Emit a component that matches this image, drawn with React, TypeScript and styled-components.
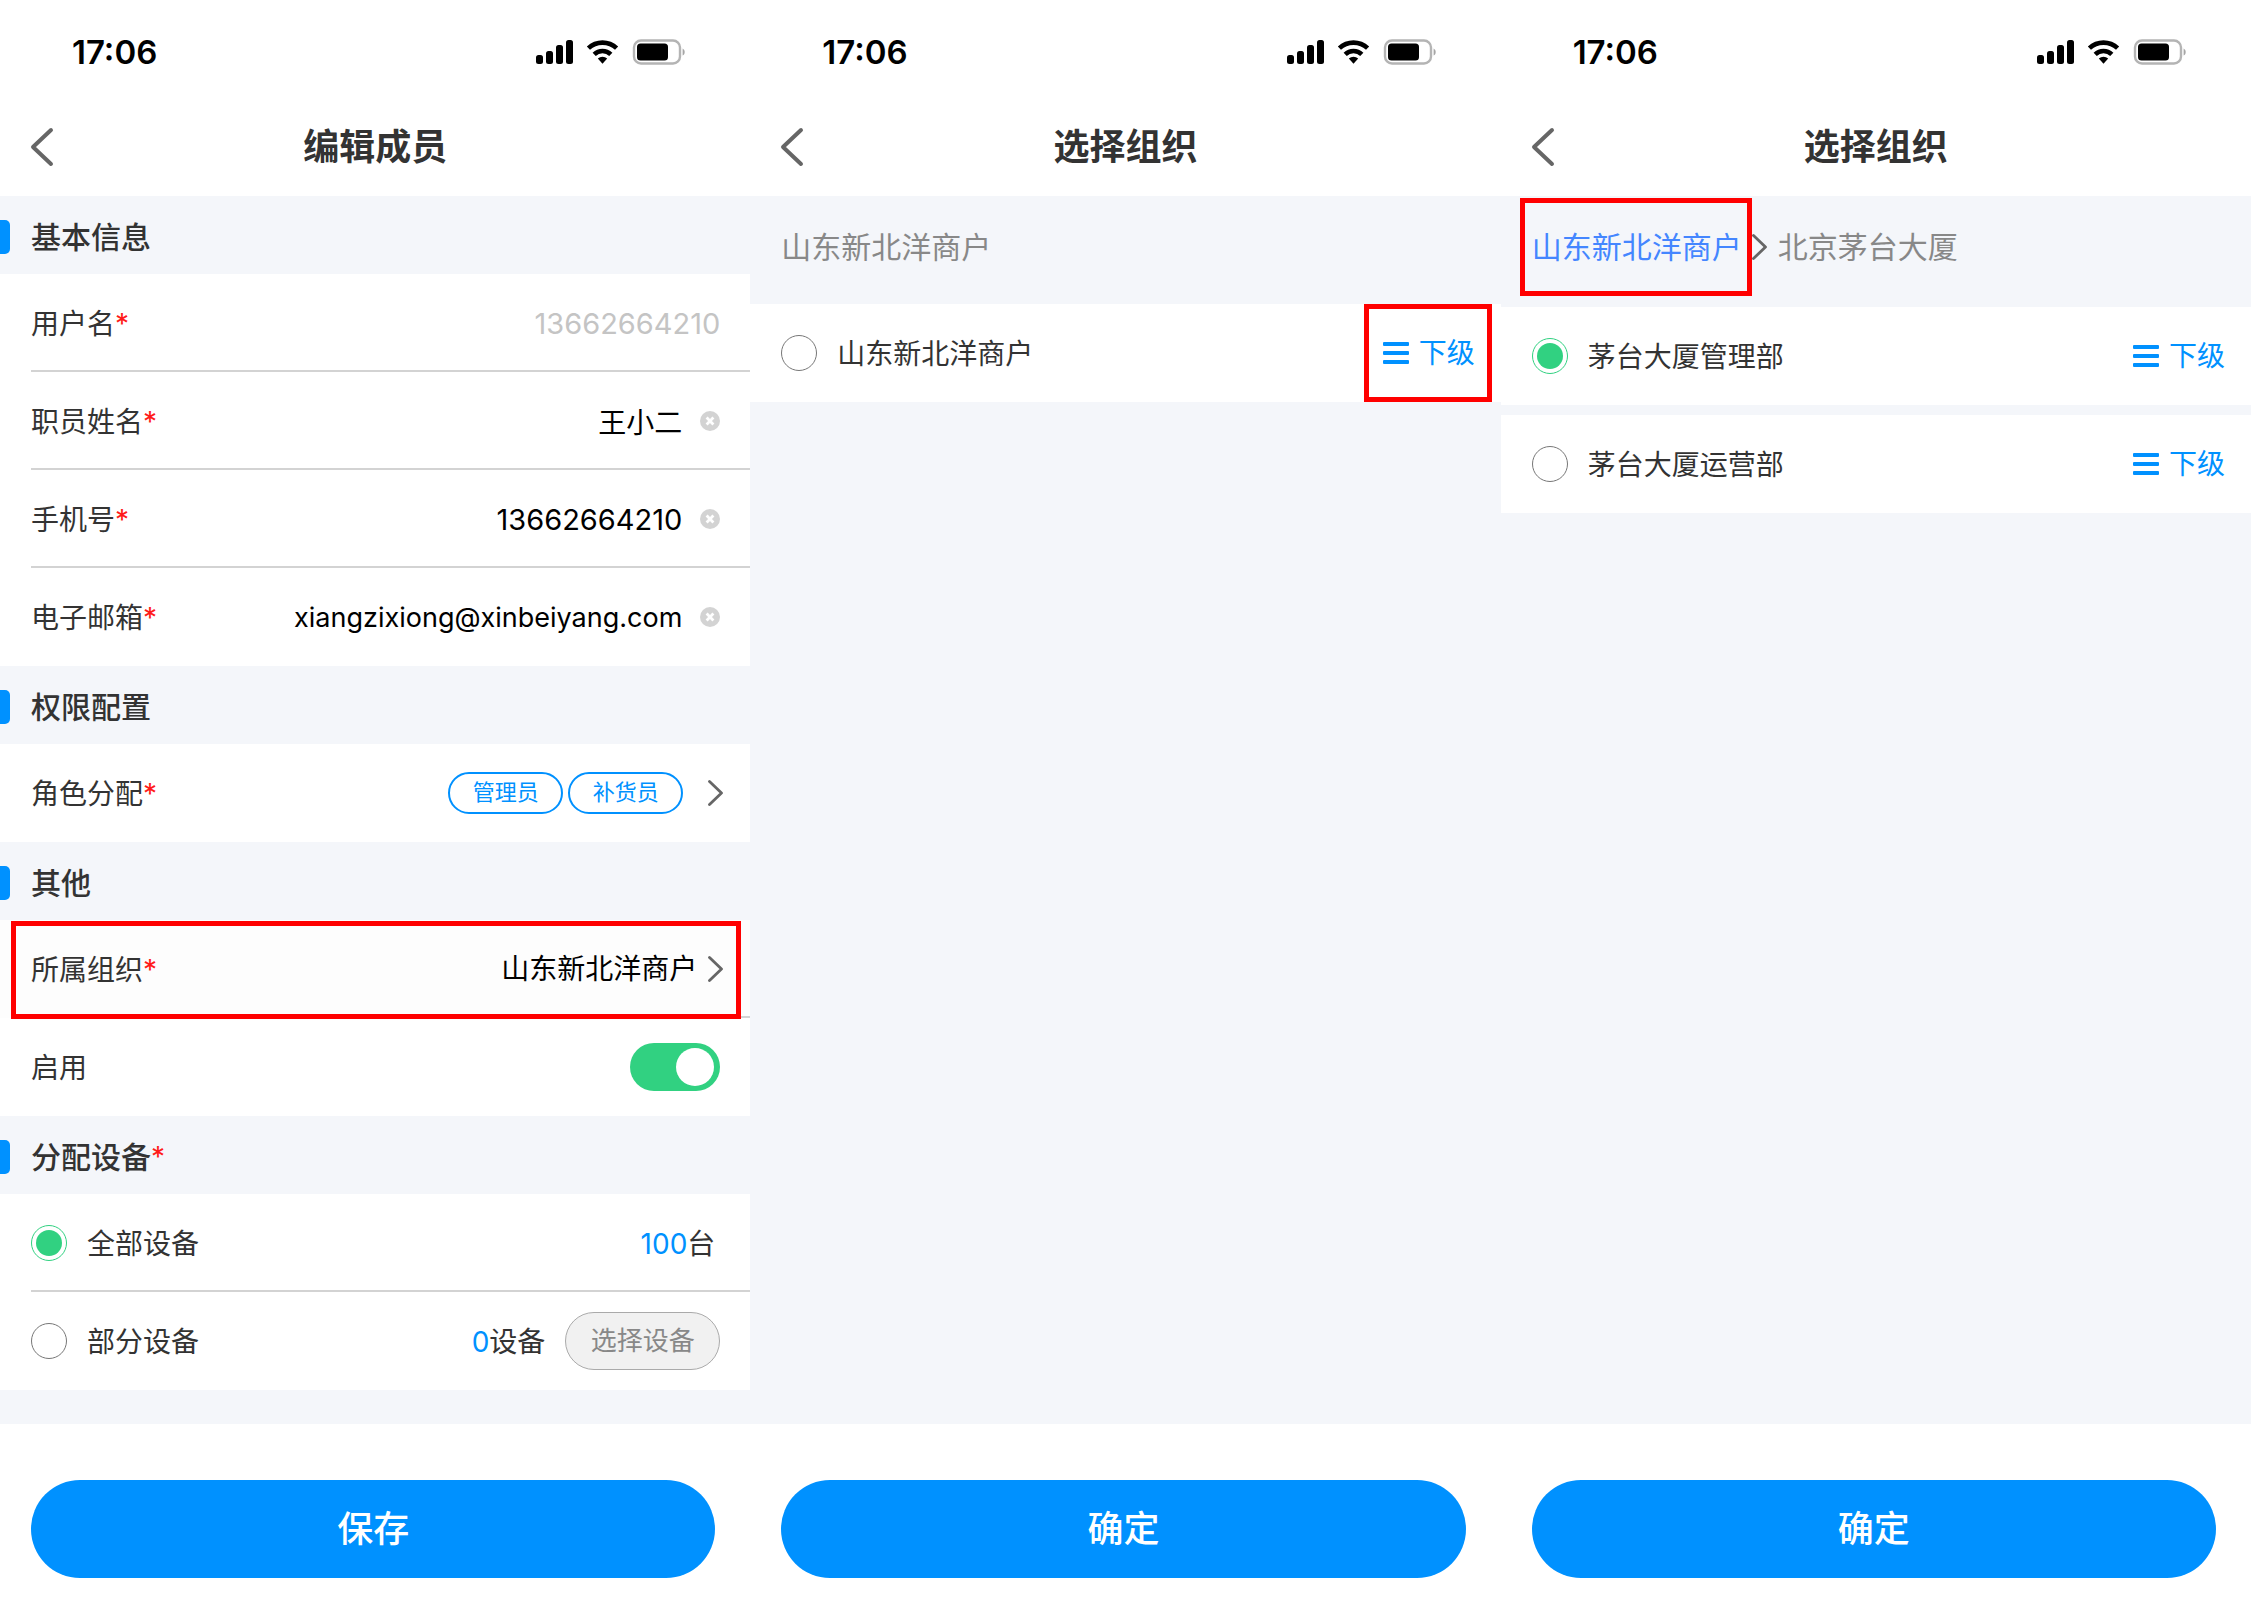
import React, { useState } from "react";
import styled, { createGlobalStyle, css } from "styled-components";

const blue = "#0091ff";
const green = "#31d181";
const ink = "#333333";
const fontStack = `Inter, "Noto Sans CJK SC", sans-serif`;

const GlobalStyle = createGlobalStyle`
  *, *::before, *::after { box-sizing: border-box; }
  body { margin: 0; background: #ffffff; }
  body, button, input { font-family: ${fontStack}; }
  button { border: 0; padding: 0; background: none; color: inherit; line-height: 40px; cursor: pointer; }
`;

/* ---------- layout ---------- */

const Board = styled.main`
  display: grid;
  grid-template-columns: repeat(3, minmax(0, 1fr));
  min-height: 100vh;
  color: ${ink};
  font-size: 28px;
  line-height: 40px;
`;

const Screen = styled.section`
  display: flex;
  flex-direction: column;
  min-width: 0;
  background: #f4f6fa;
`;

const Body = styled.div`
  flex: 1;
`;

const Footer = styled.footer`
  padding: 56px 35px 46px 31px;
  background: #ffffff;
`;

const PrimaryButton = styled.button`
  display: block;
  width: 100%;
  height: 98px;
  border-radius: 49px;
  background: ${blue};
  color: #ffffff;
  font-size: 36px;
  font-weight: 500;
`;

/* ---------- status bar and navigation ---------- */

const StatusBar = styled.div`
  display: flex;
  align-items: center;
  justify-content: space-between;
  height: 98px;
  padding: 6px 64px 0 72px;
  background: #ffffff;
  color: #000000;
  font-size: 33px;
  font-weight: 600;
`;

const NavBar = styled.header`
  display: grid;
  grid-template-columns: 90px 1fr 90px;
  align-items: center;
  height: 98px;
  background: #ffffff;
`;

const BackButton = styled.button`
  display: flex;
  align-items: center;
  height: 98px;
  padding-left: 30px;
`;

const NavTitle = styled.h1`
  margin: 0;
  font-size: 36px;
  font-weight: 700;
  text-align: center;
`;

/* ---------- form ---------- */

const SectionTitle = styled.h2`
  display: flex;
  align-items: center;
  height: 78px;
  margin: 0;
  padding-top: 3px;
  font-size: 30px;
  font-weight: 500;

  &::before {
    content: "";
    width: 10px;
    height: 34px;
    margin-right: 21px;
    border-radius: 0 5px 5px 0;
    background: ${blue};
  }
`;

const Star = styled.span`
  color: #ff1a1a;
  font-weight: 400;
  font-size: 28px;
`;

const Group = styled.div`
  background: #ffffff;
`;

const Row = styled.div<{ $tinted?: boolean }>`
  position: relative;
  display: flex;
  align-items: center;
  height: 98px;
  padding: 0 30px 0 31px;
  background: ${(p) => (p.$tinted ? "#fdfdfd" : "#ffffff")};

  &:not(:last-child)::after {
    content: "";
    position: absolute;
    left: 31px;
    right: 0;
    bottom: 0;
    height: 2px;
    background: #d3d3d3;
  }
`;

const Label = styled.label`
  flex: none;
  padding-top: 2px;
`;

const fieldSizes: Record<string, number> = { text: 28, tel: 29, email: 27 };

const TextField = styled.input`
  flex: 1;
  min-width: 0;
  height: 60px;
  padding: 0;
  border: 0;
  outline: 0;
  background: none;
  color: #000000;
  font-size: ${(p) => fieldSizes[p.type ?? "text"]}px;
  text-align: right;

  &:disabled {
    color: #c4c4c4;
  }
`;

const ClearButton = styled.button`
  display: flex;
  flex: none;
  margin-left: 18px;
`;

const RowAction = styled.button`
  display: flex;
  flex: 1;
  align-items: center;
  justify-content: flex-end;
  height: 96px;
  color: #000000;
  font-size: 28px;
`;

const Tag = styled.span`
  width: 115px;
  height: 42px;
  margin-left: 5px;
  border: 2px solid ${blue};
  border-radius: 21px;
  color: ${blue};
  font-size: 22px;
  line-height: 36px;
  text-align: center;
`;

const ArrowSlot = styled.span<{ $gap: number }>`
  display: flex;
  margin-left: ${(p) => p.$gap}px;
  margin-right: -3px;
`;

const Switch = styled.input`
  display: flex;
  align-items: center;
  width: 90px;
  height: 48px;
  margin: 0 0 0 auto;
  padding: 0 6px;
  border-radius: 24px;
  background: #d8d8d8;
  appearance: none;
  cursor: pointer;

  &::before {
    content: "";
    width: 38px;
    height: 38px;
    border-radius: 50%;
    background: #ffffff;
  }

  &:checked {
    justify-content: flex-end;
    background: ${green};
  }
`;

const Radio = styled.input`
  display: grid;
  flex: none;
  place-items: center;
  width: 36px;
  height: 36px;
  margin: 0 20px 0 0;
  border: 1px solid #777777;
  border-radius: 50%;
  background: #ffffff;
  appearance: none;
  cursor: pointer;

  &:checked {
    border-color: ${green};
  }

  &:checked::before {
    content: "";
    width: 26px;
    height: 26px;
    border-radius: 50%;
    background: ${green};
  }
`;

const Count = styled.span<{ $inset?: boolean }>`
  margin-left: auto;
  padding-top: 2px;
  padding-right: ${(p) => (p.$inset ? "5px" : "0")};

  b {
    color: ${blue};
    font-weight: 400;
  }
`;

const PickButton = styled.button`
  width: 155px;
  height: 58px;
  margin-left: 20px;
  border: 1px solid #aaaaaa;
  border-radius: 29px;
  background: #f1f1f1;
  color: #888888;
  font-size: 26px;
`;

/* ---------- organisation picker ---------- */

const Crumbs = styled.nav<{ $deep: boolean }>`
  display: flex;
  padding: 2px 0 ${(p) => (p.$deep ? 11 : 8)}px 19px;
  font-size: 30px;
`;

const frame = css`
  &::after {
    content: "";
    position: absolute;
    inset: 0;
    border: 5px solid #ff0000;
    pointer-events: none;
  }
`;

const Crumb = styled.a<{ $framed?: boolean }>`
  position: relative;
  display: flex;
  align-items: center;
  height: 98px;
  padding: 0 10px 0 12px;
  color: ${(p) => (p.$framed ? "#4486ff" : "#888888")};
  text-decoration: none;
  ${(p) => p.$framed && frame}
`;

const CrumbArrow = styled.span`
  display: flex;
  align-items: center;
  margin-right: -1px;
`;

const OrgList = styled.div`
  display: grid;
  gap: 10px;
`;

const OrgRow = styled.div`
  display: flex;
  align-items: center;
  height: 98px;
  padding: 0 9px 0 31px;
  background: #ffffff;
`;

const SubButton = styled.button<{ $framed?: boolean }>`
  position: relative;
  display: flex;
  align-items: center;
  gap: 10px;
  height: 98px;
  margin-left: auto;
  padding: 0 17px 0 19px;
  color: ${blue};
  font-size: 28px;
  ${(p) => p.$framed && frame}
`;

const RowFrame = styled.span`
  position: absolute;
  z-index: 1;
  top: 1px;
  bottom: -1px;
  left: 11px;
  right: 9px;
  border: 5px solid #ff0000;
  pointer-events: none;
`;

/* ---------- icons ---------- */

const StatusIcons = () => (
  <svg width="151" height="28" viewBox="0 0 151 28" aria-hidden="true">
    <rect x="1" y="17" width="7" height="9" rx="2.5" />
    <rect x="11" y="13" width="7" height="13" rx="2.5" />
    <rect x="21" y="7" width="7" height="19" rx="2.5" />
    <rect x="31" y="2" width="7" height="24" rx="2.5" />
    <g fill="none" stroke="#000" strokeWidth="4.6">
      <path d="M53.4 10.2a20.5 20.5 0 0 1 28.2 0" />
      <path d="M59.2 16.3a12 12 0 0 1 16.6 0" />
    </g>
    <path d="M62.8 20.6a7 7 0 0 1 9.4 0l-4.7 5.2z" />
    <rect x="99" y="2.5" width="46" height="23" rx="7" fill="none" stroke="#b4b4b4" strokeWidth="2.4" />
    <rect x="102" y="5.5" width="31" height="17" rx="3.5" />
    <path d="M147.6 10.4c2.8 1.4 2.8 5.8 0 7.2z" fill="#a6a6a6" />
  </svg>
);

const BackIcon = () => (
  <svg width="24" height="40" viewBox="0 0 24 40" fill="none" stroke="#666" strokeWidth="4" strokeLinecap="round" strokeLinejoin="round" aria-hidden="true">
    <path d="M21 3 3 20l18 17" />
  </svg>
);

const ArrowIcon = () => (
  <svg width="15" height="28" viewBox="1 0 15 28" fill="none" stroke="#666" strokeWidth="2.8" strokeLinecap="round" strokeLinejoin="round" aria-hidden="true">
    <path d="m2.500 2.500 12 11.500-12 11.500" />
  </svg>
);

const ClearIcon = () => (
  <svg width="20" height="20" viewBox="0 0 20 20" aria-hidden="true">
    <circle cx="10" cy="10" r="10" fill="#d3d3d3" />
    <path d="m6.600 6.600 6.800 6.800m0-6.800-6.800 6.800" stroke="#fff" strokeWidth="2.800" />
  </svg>
);

const MenuIcon = () => (
  <svg width="26" height="22" viewBox="0 0 26 22" fill={blue} aria-hidden="true">
    <rect width="26" height="4" rx="1" />
    <rect y="9" width="26" height="4" rx="1" />
    <rect y="18" width="26" height="4" rx="1" />
  </svg>
);

/* ---------- parts ---------- */

const TopBars = ({ title }: { title: string }) => (
  <>
    <StatusBar>
      <span>17:06</span>
      <StatusIcons />
    </StatusBar>
    <NavBar>
      <BackButton type="button" aria-label="返回">
        <BackIcon />
      </BackButton>
      <NavTitle>{title}</NavTitle>
    </NavBar>
  </>
);

type FieldProps = { id: string; label: string; initial: string; type?: string; disabled?: boolean };

const Field = ({ id, label, initial, type = "text", disabled }: FieldProps) => {
  const [value, setValue] = useState(initial);
  return (
    <Row>
      <Label htmlFor={id}>
        {label}
        <Star>*</Star>
      </Label>
      <TextField id={id} type={type} value={value} disabled={disabled} onChange={(e) => setValue(e.target.value)} />
      {!disabled && (
        <ClearButton type="button" aria-label="清除" onClick={() => setValue("")}>
          <ClearIcon />
        </ClearButton>
      )}
    </Row>
  );
};

const MemberScreen = () => {
  const [enabled, setEnabled] = useState(true);
  const [scope, setScope] = useState("all");
  return (
    <Screen>
      <TopBars title="编辑成员" />
      <Body>
        <SectionTitle>基本信息</SectionTitle>
        <Group>
          <Field id="account" label="用户名" initial="13662664210" type="tel" disabled />
          <Field id="name" label="职员姓名" initial="王小二" />
          <Field id="phone" label="手机号" initial="13662664210" type="tel" />
          <Field id="email" label="电子邮箱" initial="xiangzixiong@xinbeiyang.com" type="email" />
        </Group>

        <SectionTitle>权限配置</SectionTitle>
        <Group>
          <Row>
            <Label htmlFor="roles">
              角色分配<Star>*</Star>
            </Label>
            <RowAction id="roles" type="button">
              <Tag>管理员</Tag>
              <Tag>补货员</Tag>
              <ArrowSlot $gap={25}>
                <ArrowIcon />
              </ArrowSlot>
            </RowAction>
          </Row>
        </Group>

        <SectionTitle>其他</SectionTitle>
        <Group>
          <Row $tinted>
            <Label htmlFor="org">
              所属组织<Star>*</Star>
            </Label>
            <RowAction id="org" type="button">
              山东新北洋商户
              <ArrowSlot $gap={11}>
                <ArrowIcon />
              </ArrowSlot>
            </RowAction>
            <RowFrame />
          </Row>
          <Row>
            <Label htmlFor="enabled">启用</Label>
            <Switch id="enabled" type="checkbox" role="switch" checked={enabled} onChange={(e) => setEnabled(e.target.checked)} />
          </Row>
        </Group>

        <SectionTitle>
          分配设备<Star>*</Star>
        </SectionTitle>
        <Group>
          <Row>
            <Radio id="all" type="radio" name="scope" checked={scope === "all"} onChange={() => setScope("all")} />
            <Label htmlFor="all">全部设备</Label>
            <Count $inset>
              <b>100</b>台
            </Count>
          </Row>
          <Row>
            <Radio id="part" type="radio" name="scope" checked={scope === "part"} onChange={() => setScope("part")} />
            <Label htmlFor="part">部分设备</Label>
            <Count>
              <b>0</b>设备
            </Count>
            <PickButton type="button">选择设备</PickButton>
          </Row>
        </Group>
      </Body>
      <Footer>
        <PrimaryButton type="button">保存</PrimaryButton>
      </Footer>
    </Screen>
  );
};

type OrgProps = { group: string; path: string[]; orgs: string[]; picked?: string; frameSub?: boolean };

const OrgScreen = ({ group, path, orgs, picked, frameSub }: OrgProps) => {
  const [current, setCurrent] = useState(picked);
  return (
    <Screen>
      <TopBars title="选择组织" />
      <Body>
        <Crumbs $deep={path.length > 1}>
          {path.map((name, i) => (
            <React.Fragment key={name}>
              {i > 0 && (
                <CrumbArrow>
                  <ArrowIcon />
                </CrumbArrow>
              )}
              <Crumb href="#" $framed={i < path.length - 1}>
                {name}
              </Crumb>
            </React.Fragment>
          ))}
        </Crumbs>
        <OrgList>
          {orgs.map((name, i) => (
            <OrgRow key={name}>
              <Radio id={`${group}-${i}`} type="radio" name={group} checked={current === name} onChange={() => setCurrent(name)} />
              <Label htmlFor={`${group}-${i}`}>{name}</Label>
              <SubButton type="button" $framed={frameSub}>
                <MenuIcon />
                下级
              </SubButton>
            </OrgRow>
          ))}
        </OrgList>
      </Body>
      <Footer>
        <PrimaryButton type="button">确定</PrimaryButton>
      </Footer>
    </Screen>
  );
};

export default function App() {
  return (
    <>
      <GlobalStyle />
      <Board>
        <MemberScreen />
        <OrgScreen group="root-org" path={["山东新北洋商户"]} orgs={["山东新北洋商户"]} frameSub />
        <OrgScreen
          group="child-org"
          path={["山东新北洋商户", "北京茅台大厦"]}
          orgs={["茅台大厦管理部", "茅台大厦运营部"]}
          picked="茅台大厦管理部"
        />
      </Board>
    </>
  );
}
